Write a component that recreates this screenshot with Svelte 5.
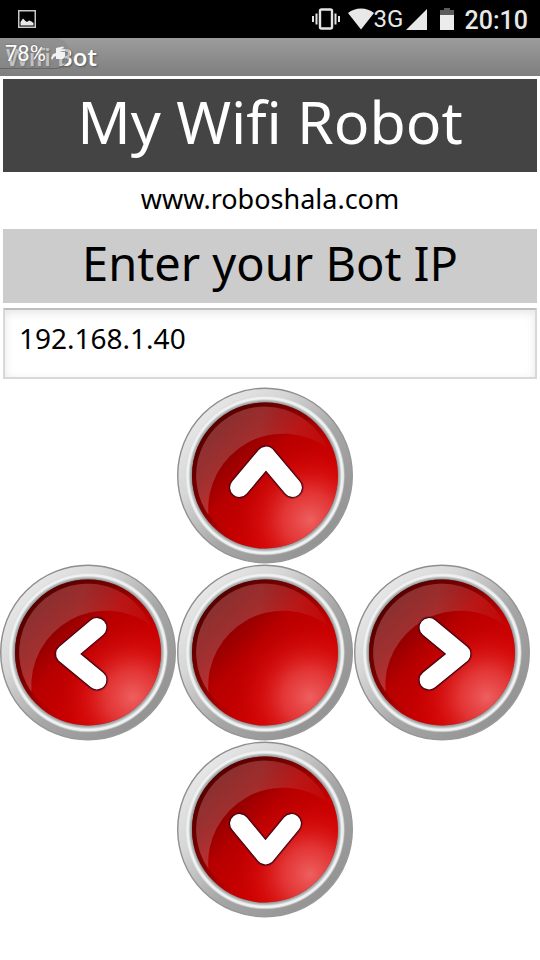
<script>
  let ip = $state('192.168.1.40');

  const pads = [
    { name: 'up', label: 'Forward', points: '62.5,100.5 89,69 115.5,100.5' },
    { name: 'left', label: 'Left', points: '97,63.5 65.5,90 97,116' },
    { name: 'stop', label: 'Stop', points: '' },
    { name: 'right', label: 'Right', points: '75,63.5 107,90 75,116' },
    { name: 'down', label: 'Reverse', points: '62.5,82.5 88.5,114 114.5,82.5' }
  ];
</script>

<div class="screen">
  <div class="status">
    <svg class="picture" width="18" height="18" viewBox="0 0 18 18">
      <rect x="0.75" y="0.75" width="16.5" height="16.5" fill="none" stroke="#c8c8c8" stroke-width="1.5" />
      <path d="M2.5 15.5V12L5 8.5L7.5 11L9 12L11 10.5L13.5 11.5L15.5 13V15.5Z" fill="#e8e8e8" />
    </svg>
    <div class="signals">
      <svg width="28" height="22" viewBox="0 0 28 22" fill="none" stroke="#e4e4e4">
        <rect x="8" y="1.5" width="12" height="19" rx="1.5" stroke-width="2.4" />
        <path d="M4.5 5.5V16.5M23.5 5.5V16.5" stroke-width="2" />
        <path d="M1 8V14M27 8V14" stroke-width="2" />
      </svg>
      <svg class="wifi" width="26" height="22" viewBox="0 0 26 22">
        <path d="M13 21.5L0 5Q5.500 .5 13 .5T26 5Z" fill="#e8e8e8" />
      </svg>
      <span class="network">3G</span>
      <svg class="cell" width="21" height="21" viewBox="0 0 21 21">
        <path d="M0 21L21 0V21Z" fill="#e8e8e8" />
      </svg>
      <svg class="battery" width="14" height="22" viewBox="0 0 14 22">
        <path d="M4 0H10V2H14V8H0V2H4Z" fill="#5c5c5c" />
        <path d="M0 7H14V22H0Z" fill="#ececec" />
      </svg>
      <span class="clock">20:10</span>
    </div>
  </div>

  <header class="appbar">
    <span class="appname">Wifi Bot</span>
    <div class="charge">
      <span>78%</span>
      <svg width="15" height="16" viewBox="0 0 15 16" fill="#f2f2f2">
        <path d="M5 3L12 1.500L13 3L9 4.500H14V6H9V7H14V11L12 14H5V11L3 12L1 15L0 13L2 9L5 8Z" />
      </svg>
    </div>
  </header>

  <main>
    <h1>My Wifi Robot</h1>
    <p class="site">www.roboshala.com</p>
    <label for="bot-ip">Enter your Bot IP</label>
    <input id="bot-ip" type="text" bind:value={ip} />
  </main>

  <div class="dpad">
    {#each pads as pad}
      <button class={pad.name} type="button" aria-label={pad.label}>
        <svg viewBox="0 0 177 177">
          <defs>
            <linearGradient id="rim-{pad.name}" x1="0.15" y1="0.15" x2="0.85" y2="0.85">
              <stop offset="0" stop-color="#e6e6e6" />
              <stop offset="0.25" stop-color="#d6d6d6" />
              <stop offset="0.6" stop-color="#a6a6a6" />
              <stop offset="1" stop-color="#949494" />
            </linearGradient>
            <linearGradient id="edge-{pad.name}" x1="0" y1="0" x2="1" y2="1">
              <stop offset="0.1" stop-color="#8c8c8c" />
              <stop offset="0.9" stop-color="#9a9a9a" />
            </linearGradient>
            <radialGradient id="groove-{pad.name}" gradientUnits="userSpaceOnUse" cx="88" cy="88.5" r="80">
              <stop offset="0.91" stop-color="#8b9090" />
              <stop offset="0.935" stop-color="#b4b8b8" />
              <stop offset="0.96" stop-color="#f2f4f4" />
              <stop offset="0.98" stop-color="#eceeee" />
              <stop offset="1" stop-color="#d0d0d0" stop-opacity="0.2" />
            </radialGradient>
            <linearGradient id="base-{pad.name}" x1="0.12" y1="0.12" x2="0.85" y2="0.85">
              <stop offset="0" stop-color="#6c0000" />
              <stop offset="0.25" stop-color="#900000" />
              <stop offset="0.45" stop-color="#b80000" />
              <stop offset="0.8" stop-color="#cc0000" />
            </linearGradient>
            <radialGradient id="glow-{pad.name}" gradientUnits="userSpaceOnUse" cx="133" cy="133" r="78">
              <stop offset="0" stop-color="#f26a6a" stop-opacity="0.9" />
              <stop offset="0.35" stop-color="#ea4646" stop-opacity="0.75" />
              <stop offset="0.65" stop-color="#e01818" stop-opacity="0.45" />
              <stop offset="1" stop-color="#d00000" stop-opacity="0" />
            </radialGradient>
            <linearGradient id="gloss-{pad.name}" x1="0" y1="0.3" x2="1" y2="0.45">
              <stop offset="0" stop-color="#d8e0e0" stop-opacity="0.22" />
              <stop offset="0.45" stop-color="#d8e0e0" stop-opacity="0.2" />
              <stop offset="1" stop-color="#c0c0c0" stop-opacity="0.03" />
            </linearGradient>
            <linearGradient id="shade-{pad.name}" x1="0.1" y1="0.1" x2="0.75" y2="0.75">
              <stop offset="0" stop-color="#500000" stop-opacity="0.9" />
              <stop offset="0.5" stop-color="#700000" stop-opacity="0.6" />
              <stop offset="0.8" stop-color="#900000" stop-opacity="0" />
            </linearGradient>
          </defs>
          <circle cx="88" cy="88.500" r="87.300" fill="url(#rim-{pad.name})" stroke="url(#edge-{pad.name})" stroke-width="1.400" />
          <circle cx="88" cy="88.500" r="80" fill="url(#groove-{pad.name})" />
          <circle cx="88" cy="88.500" r="73" fill="url(#base-{pad.name})" />
          <circle cx="88" cy="88.500" r="73" fill="url(#glow-{pad.name})" />
          <circle cx="88" cy="88.500" r="70.800" fill="none" stroke="url(#shade-{pad.name})" stroke-width="4.400" />
          <path d="M31.500 128A69 69 0 0 1 88 19.500A69 69 0 0 1 151 61.500A75 75 0 0 0 31.500 128Z" fill="url(#gloss-{pad.name})" />
          {#if pad.points}
            <g fill="none" stroke-linecap="round" stroke-linejoin="round">
              <polyline points={pad.points} stroke="#5a0010" stroke-opacity="0.45" stroke-width="22.500" />
              <polyline points={pad.points} stroke="#3c0010" stroke-width="20.500" />
              <polyline points={pad.points} stroke="#fff" stroke-width="18.800" />
            </g>
          {/if}
        </svg>
      </button>
    {/each}
  </div>
</div>

<style>
  :global(body) {
    margin: 0;
    background: #fff;
  }
  .screen {
    min-height: 100vh;
    background: #fff;
    font-family: 'Noto Sans', 'Open Sans', sans-serif;
    color: #000;
  }
  svg {
    display: block;
    flex: none;
  }
  .status {
    display: flex;
    align-items: center;
    justify-content: space-between;
    height: 38px;
    padding: 0 12px 0 18px;
    background: #000;
    color: #e8e8e8;
    font-family: Roboto, sans-serif;
    box-sizing: border-box;
  }
  .signals {
    display: flex;
    align-items: center;
  }
  .wifi {
    margin-left: 8px;
  }
  .network {
    width: 30px;
    font-size: 24px;
    line-height: 38px;
  }
  .cell {
    margin-left: 2px;
  }
  .battery {
    margin: 0 11px 0 13px;
  }
  .clock {
    padding-top: 4px;
    font-size: 25px;
    font-weight: 500;
    line-height: 34px;
  }
  .appbar {
    position: relative;
    height: 38px;
    padding-left: 6px;
    background: linear-gradient(#9c9c9c, #7e7e7e);
    color: #fff;
  }
  .appname {
    font-family: 'Open Sans', 'Noto Sans', sans-serif;
    font-size: 24px;
    font-weight: 600;
    line-height: 38px;
    text-shadow: 1px 1px 2px #555;
  }
  .charge {
    position: absolute;
    top: 0;
    left: 0;
    display: flex;
    align-items: center;
    gap: 5px;
    height: 30px;
    padding: 0 4px 0 5px;
    border-bottom: 1px solid #666;
    border-radius: 0 16px 16px 0;
    background: rgba(136, 136, 136, 0.5);
    font-family: Roboto, sans-serif;
    font-size: 22px;
    text-shadow: 0 0 2px #555;
  }
  main {
    display: flex;
    flex-direction: column;
    padding: 3px 3px 0;
    text-align: center;
  }
  h1 {
    margin: 0;
    padding-bottom: 9px;
    background: #444;
    color: #fff;
    font-size: 59px;
    font-weight: 400;
    line-height: 84px;
  }
  .site {
    margin: 0;
    padding-bottom: 3px;
    font-size: 27px;
    line-height: 54px;
  }
  label {
    padding-bottom: 6px;
    background: #ccc;
    font-size: 47px;
    line-height: 68px;
  }
  input {
    height: 71px;
    margin: 5px 0 8px;
    padding: 0 14px 12px;
    border: 2px solid #d8d8d8;
    border-top-color: #bebebe;
    border-radius: 0;
    background: #fff;
    box-shadow: inset 0 3px 10px #e6e6e6;
    color: #000;
    font: inherit;
    font-size: 28px;
    box-sizing: border-box;
    outline: none;
  }
  .dpad {
    display: grid;
    grid-template-columns: repeat(3, 1fr);
    grid-template-areas:
      '. up .'
      'left stop right'
      '. down .';
    margin-right: 9px;
  }
  button {
    padding: 0;
    border: 0;
    border-radius: 50%;
    background: none;
    cursor: pointer;
  }
  button svg {
    width: 100%;
  }
  .up {
    grid-area: up;
  }
  .left {
    grid-area: left;
  }
  .stop {
    grid-area: stop;
  }
  .right {
    grid-area: right;
  }
  .down {
    grid-area: down;
  }
</style>
